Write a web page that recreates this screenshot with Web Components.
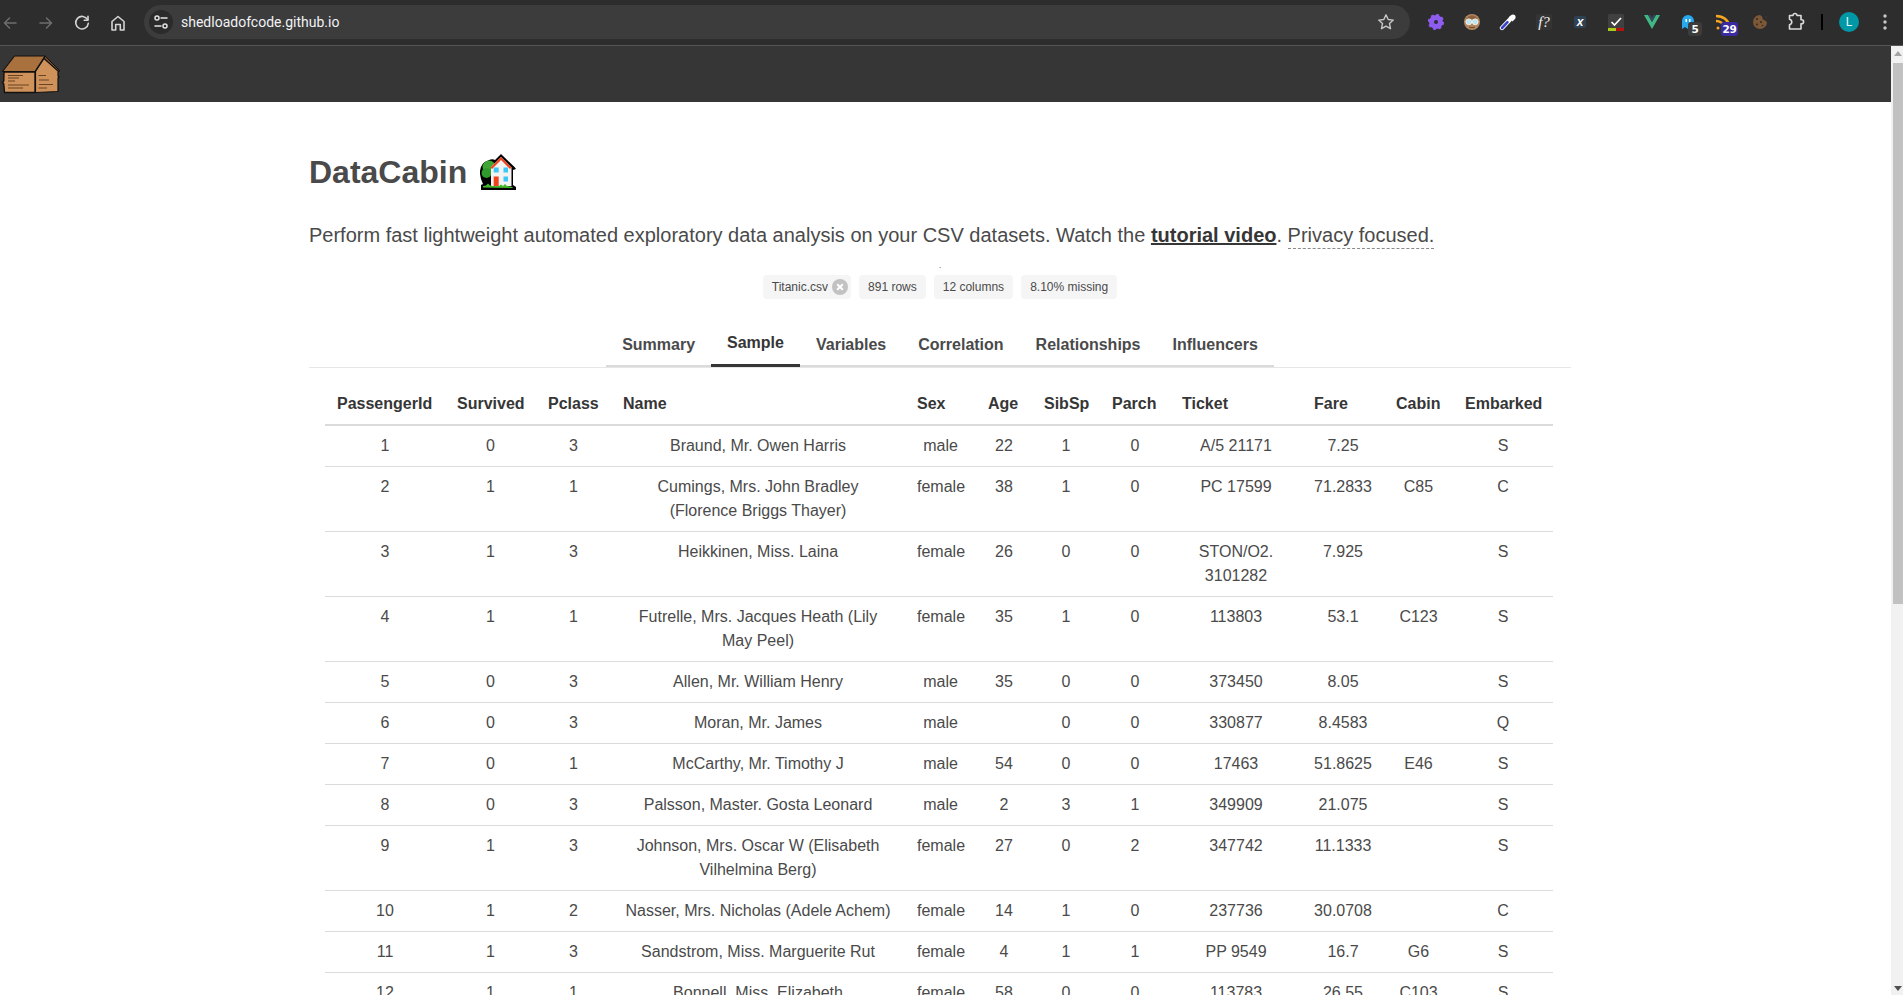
<!DOCTYPE html>
<html lang="en">
<head>
<meta charset="utf-8">
<title>DataCabin</title>
<style>
html,body{margin:0;padding:0;height:995px;overflow:hidden;background:#fff;font-family:"Liberation Sans",Arial,sans-serif}
</style>
</head>
<body>
<template id="t-toolbar">
<style>
:host{display:flex;align-items:center;height:45px;background:#2d2d2d;border-bottom:1px solid #555;color:#c7c7c7;flex:none}
.nav{display:flex;margin-left:-8px;margin-right:8px}
.nb{width:36px;height:34px;display:flex;align-items:center;justify-content:center}
svg{display:block;fill:none;stroke-linecap:round;stroke-linejoin:round}
.omni{width:1266px;height:34px;border-radius:17px;background:#3c3c3c;display:flex;align-items:center;box-sizing:border-box;padding:0 14px 0 5px;margin-right:8px;margin-top:-1px}
.info{width:24px;height:24px;border-radius:50%;background:#2b2b2b;display:flex;align-items:center;justify-content:center;flex:none}
.url{font:14px Roboto,"Noto Sans",sans-serif;color:#f0f2f5;margin-left:8px;flex:1}
.ext{display:flex;align-items:center}
</style>
<div class="nav">
<div class="nb"><svg width="16" height="16" viewBox="0 0 16 16" stroke="#6d6e70" stroke-width="1.5"><path d="M14 8H2.5M7.5 3 2.5 8l5 5"/></svg></div>
<div class="nb"><svg width="16" height="16" viewBox="0 0 16 16" stroke="#6d6e70" stroke-width="1.5"><path d="M2 8h11.5M8.5 3l5 5-5 5"/></svg></div>
<div class="nb"><svg width="20" height="20" viewBox="0 0 20 20" stroke="#d4d4d4" stroke-width="1.6"><path d="M15.6 6.7A6.3 6.3 0 1 0 16.3 10.4"/><path d="M16 3.4V7.2H12.2"/></svg></div>
<div class="nb"><svg width="20" height="20" viewBox="0 0 20 20" stroke="#d4d4d4" stroke-width="1.6"><path d="M4 8.5 10 3.5l6 5V17h-3.7v-5.5H7.7V17H4z"/></svg></div>
</div>
<div class="omni">
<div class="info"><svg width="24" height="24" viewBox="0 0 24 24" stroke="#e3e3e3" stroke-width="1.5"><circle cx="8" cy="8" r="2"/><path d="M12 8h6M6 16h6"/><circle cx="16" cy="16" r="2"/></svg></div>
<div class="url">shedloadofcode.github.io</div>
<svg width="20" height="20" viewBox="0 0 20 20" stroke="#c7c7c7" stroke-width="1.4"><path d="M10 2.8l2.2 4.7 5.1.6-3.8 3.5 1 5.1-4.5-2.6-4.5 2.6 1-5.1-3.8-3.5 5.1-.6z"/></svg>
</div>
<div class="ext"><slot></slot></div>
</template>

<template id="t-ext">
<style>
:host{display:flex;width:36px;height:34px;align-items:center;justify-content:center;position:relative;flex:none;margin-top:-1px}
.b{position:absolute;right:4px;top:17px;height:14px;min-width:14px;padding:0 1.5px;box-sizing:border-box;border-radius:3px;color:#fff;font:bold 10.5px/14px "DejaVu Sans",sans-serif;text-align:center;letter-spacing:-.3px}
</style>
<slot></slot><span class="b" hidden></span>
</template>

<template id="t-navbar">
<style>
:host{display:flex;align-items:flex-start;height:56px;background:#363636;flex:none}
svg{display:block;margin:9px 0 0 1px}
</style>
<svg width="60" height="39" viewBox="0 0 60 39" fill="none" stroke-linejoin="round">
<path d="M13.5 1H44L34 16.5H1.5z" fill="#a9713d" stroke="#111" stroke-width="1.1"/>
<path d="M44 1 59 16 56 16.5 43 4z" fill="#7d5029" stroke="#111" stroke-width="1"/>
<path d="M43 3.5 57 16V21l1 1-1 1V36.5L34.5 37.500V16.500z" fill="#cf925b" stroke="#111" stroke-width="1.2"/>
<path d="M3 17H34V37.500H3.500L2.800 29 1.500 27.500 2.800 26z" fill="#cf925b" stroke="#111" stroke-width="1.4"/>
<path d="M7 20.500H22M7 23H18M7 26H14M7 30H28M7 33H22M37.500 20.500H45M38 25H48M38 29.500H52M37.500 33H46" stroke="#5c3a1e" stroke-width=".9"/>
</svg>
</template>

<template id="t-house">
<style>:host{display:inline-block;width:36px;height:36px;flex:none}svg{display:block}</style>
<svg width="36" height="36" viewBox="0 0 36 36">
<path d="M21 0 L34.500 13 L36 15 L33 16 V31 L36 33 V36 H1 V31 L3 30 Q-.5 23 0 17 Q.5 9 8 6.500 Q12.500 4.500 15 6 Z" fill="#000"/>
<circle cx="9" cy="13" r="6.500" fill="#3fa535"/><circle cx="6.500" cy="19" r="5" fill="#2f9a2e"/>
<path d="M21 3 31.500 13.500V32H11V13z" fill="#f3f3f3"/>
<path d="M21 3 31.500 13.500 30 15 21 6 12 15 10.500 13.500z" fill="#f0431c"/>
<rect x="13.700" y="13.500" width="5" height="5" fill="#3fc7f5"/><rect x="23.500" y="13.500" width="4.500" height="5" fill="#3fc7f5"/>
<rect x="23.500" y="22.500" width="4.500" height="5" fill="#3fc7f5"/><rect x="13.700" y="22.500" width="5" height="10" fill="#f0431c"/>
<path d="M3 33.500V32l3-.5 2-2 2 2 3 .5h6l2-1.500 2 1.500 2-2 2 2 3 .5 2.500.5v1z" fill="#45b82c"/>
</svg>
</template>

<template id="t-hero">
<style>
:host{display:block}
h1{margin:0;display:flex;align-items:center;gap:13px;font:bold 32px/36px "Liberation Sans",Arial,sans-serif;color:#4a4a4a}
p{margin:33px 0 0;font:20px/25px "Liberation Sans",Arial,sans-serif;color:#4a4a4a}
a{color:#363636;font-weight:bold;text-decoration:underline}
.tip{border-bottom:1px dashed #8a8a8a;padding-bottom:2px}
</style>
<h1>DataCabin <house-emoji></house-emoji></h1>
<p>Perform fast lightweight automated exploratory data analysis on your CSV datasets. Watch the <a href="#">tutorial video</a>. <span class="tip">Privacy focused.</span></p>
</template>

<template id="t-tag">
<style>
:host{display:inline-flex;align-items:center;height:24px;padding:0 9px;background:#f5f5f5;border-radius:4px;font:12px/18px "Liberation Sans",Arial,sans-serif;color:#4a4a4a}
svg{display:none;margin:0 -6px 0 4px}
:host([deletable]) svg{display:block}
</style>
<slot></slot>
<svg width="16" height="16" viewBox="0 0 16 16"><circle cx="8" cy="8" r="8" fill="#c2c2c2"/><path d="M5.200 5.200l5.600 5.600M10.800 5.200l-5.600 5.600" stroke="#fff" stroke-width="2"/></svg>
</template>

<template id="t-tags">
<style>
:host{display:block;margin-top:14px}
.dot{height:13px;font:8px/8px "Liberation Sans",Arial,sans-serif;color:#333;text-align:center}
.row{display:flex;justify-content:center;gap:8px}
</style>
<div class="dot">.</div>
<div class="row"><slot></slot></div>
</template>

<template id="t-tabs">
<style>
:host{display:flex;justify-content:center;margin-top:26px;border-bottom:1px solid #e6e6e6}
.ul{display:flex;border-bottom:2px solid #dbdbdb}
</style>
<div class="ul"><slot></slot></div>
</template>

<template id="t-tab">
<style>
:host{display:block;margin-bottom:-2px;padding:8px 16px;border-bottom:2px solid #dbdbdb;font:bold 16px/24px "Liberation Sans",Arial,sans-serif;color:#4a4a4a}
:host([active]){color:#363636;padding-top:6px;padding-bottom:9px;border-bottom:3px solid #363636}
</style>
<slot></slot>
</template>

<template id="t-table">
<style>
:host{display:block;margin:16px 18px 0 16px}
table{border-collapse:separate;border-spacing:0;table-layout:fixed;width:1228px;font:16px/24px "Liberation Sans",Arial,sans-serif;color:#4a4a4a}
th{padding:8px 12px;text-align:left;color:#363636;font-weight:bold;border-bottom:2px solid #dbdbdb;white-space:nowrap;height:23px}
td{padding:8px 12px;text-align:center;vertical-align:top;border-bottom:1px solid #dbdbdb}
</style>
<table><colgroup></colgroup><thead><tr></tr></thead><tbody></tbody></table>
</template>

<template id="t-scroll">
<style>
:host{display:flex;flex-direction:column;width:12px;background:#f1f1f1;flex:none;align-items:flex-end}
.a{width:10px;height:14px;display:flex;align-items:center;justify-content:center;flex:none}
.track{flex:1}
.thumb{width:10px;height:541px;background:#c1c1c1;margin-top:3px}
</style>
<div class="a"><svg width="8" height="5" viewBox="0 0 8 5"><path d="M0 5 4 0l4 5z" fill="#a3a3a3"/></svg></div>
<div class="thumb"></div>
<div class="track"></div>
<div class="a"><svg width="8" height="5" viewBox="0 0 8 5"><path d="M0 0h8L4 5z" fill="#505050"/></svg></div>
</template>

<template id="t-app">
<style>
:host{display:flex;flex-direction:column;height:995px;overflow:hidden}
.view{display:flex;flex:1;min-height:0}
.page{flex:1;min-width:0;display:flex;flex-direction:column;overflow:hidden}
.main{padding:52px 320px 0 309px}
</style>
<slot name="toolbar"></slot>
<div class="view">
<div class="page">
<slot name="navbar"></slot>
<div class="main"><slot></slot></div>
</div>
<slot name="scroll"></slot>
</div>
</template>

<data-app>
<browser-toolbar slot="toolbar">
<ext-button><svg width="16" height="16" viewBox="0 0 16 16"><circle cx="8" cy="8" r="4.500" fill="none" stroke="#8f5cf0" stroke-width="5"/><circle cx="8" cy="8" r="7.100" fill="none" stroke="#8f5cf0" stroke-width="2" stroke-dasharray="2.900 2.680"/></svg></ext-button>
<ext-button><svg width="16" height="16" viewBox="0 0 16 16"><circle cx="8" cy="8" r="8" fill="#b5895f"/><path d="M2 4.500Q8-2 14 4.500L12 5H4z" fill="#8c6240"/><circle cx="4.800" cy="7.800" r="2.900" fill="#bfe4ee" stroke="#e8f0f0"/><circle cx="11.200" cy="7.800" r="2.900" fill="#bfe4ee" stroke="#e8f0f0"/><path d="M5 13q3 1.500 6 0" stroke="#6b4426" fill="none"/></svg></ext-button>
<ext-button><svg width="18" height="18" viewBox="0 0 18 18" fill="none"><path d="M3 15 10.500 7" stroke="#fff" stroke-width="4.400" stroke-linecap="round"/><path d="M3 15 8.500 9.200" stroke="#3a45c8" stroke-width="2.600" stroke-linecap="round"/><path d="M10.500 3.500l4 4" stroke="#fff" stroke-width="3"/><circle cx="14" cy="4" r="2.600" fill="#fff"/></svg></ext-button>
<ext-button><span style="display:block;width:16px;height:16px;background:#343434;border-radius:2px;color:#f5f5f5;font:italic 15px/16px 'Liberation Serif',serif;text-align:center">f?</span></ext-button>
<ext-button><span style="display:block;width:12px;height:12px;background:#2e4254;border-radius:2px;color:#fff;font:italic bold 12px/12px 'Liberation Sans',sans-serif;text-align:center">x</span></ext-button>
<ext-button><svg width="16" height="17" viewBox="0 0 16 17"><rect width="16" height="17" rx="1.500" fill="#404040"/><path d="M3.500 8 6.500 11 13 4" stroke="#fff" stroke-width="1.700" fill="none"/><rect y="14" width="8" height="3" fill="#a9cb1c"/><rect x="8" y="14" width="8" height="3" fill="#b3120f"/></svg></ext-button>
<ext-button><svg width="16" height="14" viewBox="0 0 16 14"><path d="M0 0H4L8 7 12 0H16L8 14z" fill="#41b883"/><path d="M4 0H6.500L8 2.700 9.500 0H12L8 7z" fill="#35495e"/></svg></ext-button>
<ext-button badge="5" badge-bg="#3c3c3c"><svg width="16" height="16" viewBox="0 0 16 16"><path d="M2 15V7a6 6 0 0 1 12 0v8l-3-2-3 2-3-2z" fill="#27a9ee"/><rect x="5.500" y="5" width="1.500" height="3" fill="#fff"/><rect x="9" y="5" width="1.500" height="3" fill="#fff"/></svg></ext-button>
<ext-button badge="29" badge-bg="#3b2ba0"><svg width="16" height="16" viewBox="0 0 16 16" fill="none" stroke="#f5a623" stroke-width="2.600"><path d="M0 2Q11 2 14 13"/><path d="M0 7Q6 7 9 13"/><circle cx="2" cy="14" r="1.500" fill="#f5a623" stroke="none"/></svg></ext-button>
<ext-button><svg width="14" height="14" viewBox="0 0 14 14"><path d="M7 0a7 7 0 1 0 7 7L12 5.500 10 4.500 9 1.500z" fill="#7c5738"/><circle cx="4" cy="4" r="1" fill="#3e2817"/><circle cx="8" cy="7" r="1" fill="#3e2817"/><circle cx="4" cy="9.500" r="1" fill="#3e2817"/><circle cx="9.500" cy="10.500" r=".8" fill="#3e2817"/><circle cx="13" cy="2" r=".5" fill="#7c5738"/></svg></ext-button>
<ext-button><svg width="20" height="20" viewBox="0 0 20 20" fill="none" stroke="#dcdcdc" stroke-width="1.600" stroke-linejoin="round"><path d="M3.500 3.500H7q.2-2 2-2t2 2h4V7.800h.6a2 2 0 0 1 0 4H15V17H3.500V12.700a2.800 2.800 0 0 0 0-5.500z"/></svg></ext-button>
<tool-sep></tool-sep>
<ext-button><span style="display:block;width:20px;height:20px;border-radius:50%;background:#0097a7;color:#e6f7f9;font:12px/20px Roboto,sans-serif;text-align:center">L</span></ext-button>
<ext-button><svg width="16" height="20" viewBox="0 0 16 20" fill="#c7c7c7"><circle cx="8" cy="4" r="1.700"/><circle cx="8" cy="10" r="1.700"/><circle cx="8" cy="16" r="1.700"/></svg></ext-button>
</browser-toolbar>
<top-navbar slot="navbar"></top-navbar>
<hero-block></hero-block>
<tag-row>
<data-tag deletable>Titanic.csv</data-tag>
<data-tag>891 rows</data-tag>
<data-tag>12 columns</data-tag>
<data-tag>8.10% missing</data-tag>
</tag-row>
<tab-bar>
<tab-item>Summary</tab-item>
<tab-item active>Sample</tab-item>
<tab-item>Variables</tab-item>
<tab-item>Correlation</tab-item>
<tab-item>Relationships</tab-item>
<tab-item>Influencers</tab-item>
</tab-bar>
<data-table></data-table>
<page-scrollbar slot="scroll"></page-scrollbar>
</data-app>

<script>
function simple(name, tpl, extra){
  customElements.define(name, class extends HTMLElement{
    constructor(){super();this.attachShadow({mode:'open'}).appendChild(document.getElementById(tpl).content.cloneNode(true));}
    connectedCallback(){ if(extra) extra.call(this); }
  });
}
simple('browser-toolbar','t-toolbar');
simple('ext-button','t-ext',function(){
  const b=this.shadowRoot.querySelector('.b');
  if(this.hasAttribute('badge')){b.hidden=false;b.textContent=this.getAttribute('badge');b.style.background=this.getAttribute('badge-bg');}
});
customElements.define('tool-sep',class extends HTMLElement{
  constructor(){super();this.attachShadow({mode:'open'}).innerHTML='<style>:host{display:block;width:2px;height:16px;background:#000;margin:-1px 8px 0 7px;flex:none}</style>';}
});
simple('top-navbar','t-navbar');
simple('house-emoji','t-house');
simple('hero-block','t-hero');
simple('data-tag','t-tag');
simple('tag-row','t-tags');
simple('tab-bar','t-tabs');
simple('tab-item','t-tab');
simple('page-scrollbar','t-scroll');
simple('data-app','t-app');
const COLS=['PassengerId','Survived','Pclass','Name','Sex','Age','SibSp','Parch','Ticket','Fare','Cabin','Embarked'];
const W=[120,91,75,294,71,56,68,70,132,82,69,100];
const ROWS=[
[1,0,3,'Braund, Mr. Owen Harris','male',22,1,0,'A/5 21171','7.25','','S'],
[2,1,1,'Cumings, Mrs. John Bradley (Florence Briggs Thayer)','female',38,1,0,'PC 17599','71.2833','C85','C'],
[3,1,3,'Heikkinen, Miss. Laina','female',26,0,0,'STON/O2. 3101282','7.925','','S'],
[4,1,1,'Futrelle, Mrs. Jacques Heath (Lily May Peel)','female',35,1,0,'113803','53.1','C123','S'],
[5,0,3,'Allen, Mr. William Henry','male',35,0,0,'373450','8.05','','S'],
[6,0,3,'Moran, Mr. James','male','',0,0,'330877','8.4583','','Q'],
[7,0,1,'McCarthy, Mr. Timothy J','male',54,0,0,'17463','51.8625','E46','S'],
[8,0,3,'Palsson, Master. Gosta Leonard','male',2,3,1,'349909','21.075','','S'],
[9,1,3,'Johnson, Mrs. Oscar W (Elisabeth Vilhelmina Berg)','female',27,0,2,'347742','11.1333','','S'],
[10,1,2,'Nasser, Mrs. Nicholas (Adele Achem)','female',14,1,0,'237736','30.0708','','C'],
[11,1,3,'Sandstrom, Miss. Marguerite Rut','female',4,1,1,'PP 9549','16.7','G6','S'],
[12,1,1,'Bonnell, Miss. Elizabeth','female',58,0,0,'113783','26.55','C103','S']
];
simple('data-table','t-table',function(){
  const r=this.shadowRoot;
  r.querySelector('colgroup').innerHTML=W.map(w=>`<col style="width:${w}px">`).join('');
  r.querySelector('thead tr').innerHTML=COLS.map(c=>`<th>${c}</th>`).join('');
  r.querySelector('tbody').innerHTML=ROWS.map(row=>'<tr>'+row.map(c=>`<td>${c}</td>`).join('')+'</tr>').join('');
});
</script>
</body>
</html>
